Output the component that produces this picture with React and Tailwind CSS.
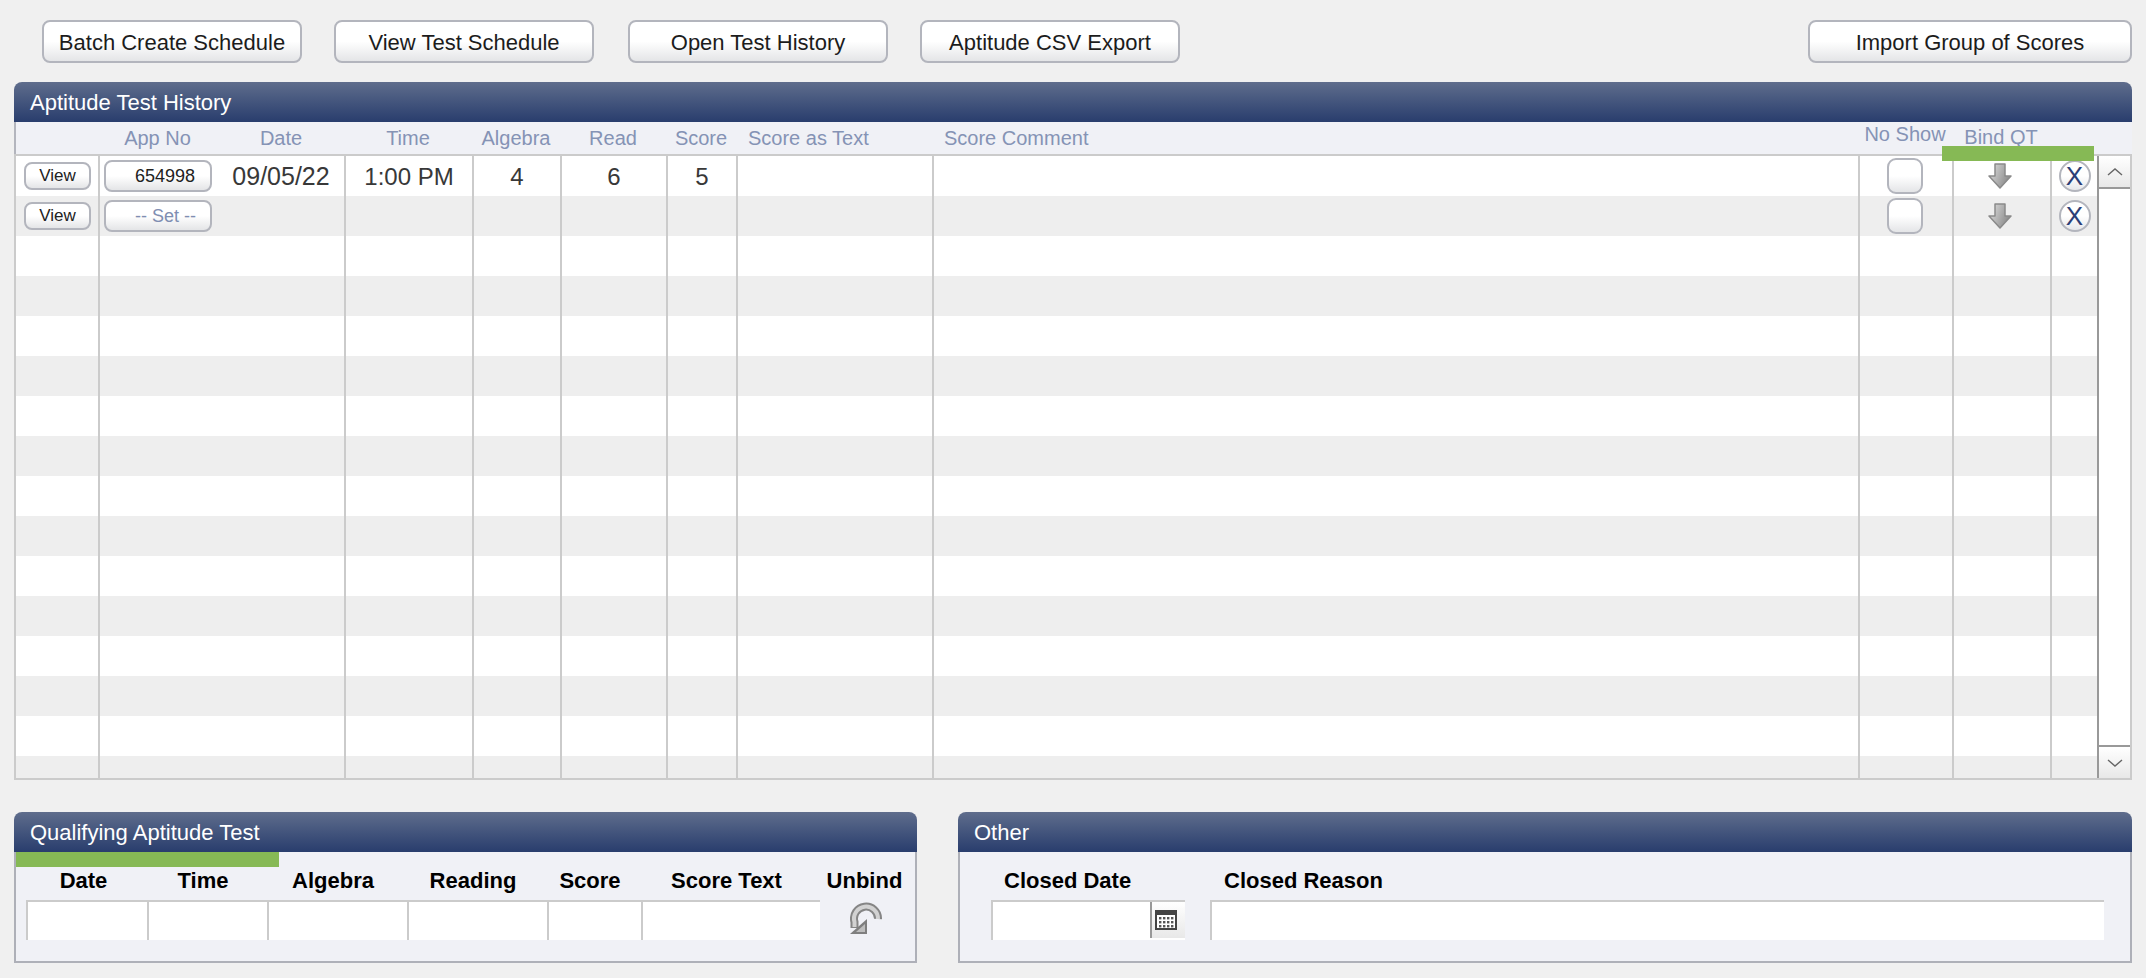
import React from "react";

const rowCols =
  "grid grid-cols-[82px_117px_129px_128px_88px_106px_70px_196px_926px_94px_98px_47px]";

const toolbar = [
  { label: "Batch Create Schedule", cls: "-mr-px" },
  { label: "View Test Schedule", cls: "mr-px" },
  { label: "Open Test History", cls: "-mr-px" },
  { label: "Aptitude CSV Export", cls: "" },
];

const rows = [
  { view: true, app: "654998", date: "09/05/22", time: "1:00 PM", algebra: "4", read: "6", score: "5" },
  { view: true, set: true },
  ...Array.from({ length: 14 }, () => ({})),
];

const btn =
  "rounded-lg border-2 border-[#b3b5bd] bg-gradient-to-b from-white from-50% to-[#e4e5e7] flex items-center";

const PanelHeader = ({ title }) => (
  <div className="h-[40px] rounded-t-lg bg-gradient-to-b from-[#5f6d8c] to-[#293d6d] text-white text-[22px] flex items-center pl-4 pt-px">
    {title}
  </div>
);

const DownArrow = () => (
  <svg width="24" height="26" viewBox="0 0 24 26">
    <defs>
      <linearGradient id="arrowFill" x1="0" y1="0" x2="1" y2="0.4">
        <stop offset="0" stopColor="#e2e2e2" />
        <stop offset="1" stopColor="#8c8c8c" />
      </linearGradient>
    </defs>
    <path d="M7 1H17V13H23L12 25L1 13H7Z" fill="url(#arrowFill)" stroke="#8a8a8a" strokeWidth="1.5" strokeLinejoin="round" />
  </svg>
);

const UnbindIcon = () => (
  <svg width="32" height="32" viewBox="0 0 32 32">
    <path d="M28 17A12 12 0 1 0 4.5 20V26" fill="none" stroke="#858585" strokeWidth="8" />
    <path d="M17 32H0L17 17Z" fill="#7f7f7f" />
    <path d="M28 17A12 12 0 1 0 4.5 20V25" fill="none" stroke="#d2d2d2" strokeWidth="4" />
    <path d="M15 30H6L15 22Z" fill="#bdbdbd" />
  </svg>
);

const CalendarIcon = () => (
  <svg width="22" height="20" viewBox="0 0 22 20">
    <rect x="1" y="1" width="20" height="18" fill="#fff" stroke="#444" strokeWidth="2" />
    <rect x="0" y="0" width="22" height="5" fill="#444" />
    {[7, 11, 15].map((y) =>
      [4, 8, 12, 16].map((x) => <rect key={`${x}-${y}`} x={x} y={y} width="2.4" height="2.4" fill="#555" />)
    )}
  </svg>
);

const Chevron = ({ d }) => (
  <svg width="16" height="10" viewBox="0 0 16 10">
    <path d={d} fill="none" stroke="#666" strokeWidth="1.4" />
  </svg>
);

const Field = ({ className }) => (
  <div className={`h-[40px] bg-white border-t-2 border-l-2 border-[#cbcbcb] ${className || ""}`} />
);

const Row = ({ row, index }) => {
  const line = "border-l-2 border-[#cbcbcb] flex items-center justify-center";
  const data = `${line} pt-[2px]`;
  return (
    <div className={`${rowCols} h-[40px] shrink-0 text-[24px] text-[#383838] ${index % 2 ? "bg-[#eeeeee]" : "bg-white"}`}>
      <div className="flex items-center pl-[8px]">
        {row.view && <div className={`${btn} w-[67px] h-[28px] justify-center text-[17px] text-[#222]`}>View</div>}
      </div>
      <div className={`${line} !justify-start pl-[4px]`}>
        {row.app && <div className={`${btn} w-[108px] h-[32px] justify-end pr-[15px] text-[18px] text-[#222]`}>{row.app}</div>}
        {row.set && <div className={`${btn} w-[108px] h-[32px] justify-end pr-[14px] text-[18px] text-[#7f8eb2]`}>-- Set --</div>}
      </div>
      <div className="flex items-center justify-center pt-[2px] pl-[3px] text-[25px]">{row.date}</div>
      <div className={data}>{row.time}</div>
      <div className={data}>{row.algebra}</div>
      <div className={data}>{row.read}</div>
      <div className={data}>{row.score}</div>
      <div className={line} />
      <div className={line} />
      <div className={`${line} pr-[3px]`}>
        {row.view && <div className={`${btn} w-[36px] h-[36px] !rounded-[9px]`} />}
      </div>
      <div className={`${line} pr-[5px]`}>{row.view && <DownArrow />}</div>
      <div className={line}>
        {row.view && (
          <div className="w-[32px] h-[32px] rounded-full border-2 border-[#b3b5bd] bg-gradient-to-b from-white from-50% to-[#e6e7ea] flex items-center justify-center text-[26px] leading-none text-[#2b3f78]">
            X
          </div>
        )}
      </div>
    </div>
  );
};

const App = () => {
  return (
    <div className="min-h-screen bg-[#f0f0f0] px-[14px] pt-[20px] text-black [font-family:'Liberation_Sans',Arial,sans-serif]">
      <div className="flex gap-[33px] pl-[28px]">
        {toolbar.map(({ label, cls }) => (
          <div key={label} className={`${btn} ${cls} w-[260px] h-[43px] justify-center pt-px text-[22px] text-[#1c1c1c]`}>
            {label}
          </div>
        ))}
        <div className={`${btn} ml-auto w-[324px] h-[43px] justify-center pt-px text-[22px] text-[#1c1c1c]`}>
          Import Group of Scores
        </div>
      </div>

      <div className="relative mt-[19px]">
        <PanelHeader title="Aptitude Test History" />
        <div className="border-l-2 border-[#b3b5bd] bg-[#f0f1f6]">
          <div className={`${rowCols} h-[32px] text-[20px] text-[#8593b5] text-center items-center`}>
            <div />
            <div className="pl-[2px]">App No</div>
            <div className="pl-[3px]">Date</div>
            <div>Time</div>
            <div>Algebra</div>
            <div>Read</div>
            <div>Score</div>
            <div className="text-left pl-[12px]">Score as Text</div>
            <div className="text-left pl-[12px]">Score Comment</div>
            <div className="-mt-[8px]">No Show</div>
            <div className="-mt-[3px]">Bind QT</div>
            <div />
          </div>
        </div>
        <div className="absolute left-[1928px] top-[64px] w-[152px] h-[15px] bg-[#86b955]" />
        <div className="flex border-t-2 border-l-2 border-b-2 border-r-2 border-[#cbcbcb] h-[626px]">
          <div className="bg-[#eeeeee] overflow-hidden flex flex-col h-[622px]">
            {rows.map((row, i) => (
              <Row key={i} row={row} index={i} />
            ))}
          </div>
          <div className="flex-1 flex flex-col bg-white border-l-2 border-[#999999]">
            <div className="h-[33px] border-b-2 border-[#999999] bg-gradient-to-b from-white to-[#e8e8e8] flex items-center justify-center">
              <Chevron d="M1 8L8 2L15 8" />
            </div>
            <div className="flex-1" />
            <div className="h-[33px] border-t-2 border-[#999999] bg-gradient-to-b from-white to-[#e8e8e8] flex items-center justify-center">
              <Chevron d="M1 2L8 8L15 2" />
            </div>
          </div>
        </div>
      </div>

      <div className="grid grid-cols-[903px_1174px] gap-[41px] mt-[32px]">
        <div>
          <PanelHeader title="Qualifying Aptitude Test" />
          <div className="h-[111px] bg-[#f0f1f6] border-x-2 border-b-2 border-[#aeb0b8]">
            <div className="w-[263px] h-[15px] bg-[#86b955]" />
            <div className="grid grid-cols-[121px_120px_140px_140px_94px_179px_90px] pl-[6px] h-[28px] mb-[5px] items-center leading-none text-[22px] font-bold text-center">
              <div className="pl-[2px]">Date</div>
              <div>Time</div>
              <div>Algebra</div>
              <div>Reading</div>
              <div>Score</div>
              <div>Score Text</div>
              <div className="pl-[7px]">Unbind</div>
            </div>
            <div className="grid grid-cols-[121px_120px_140px_140px_94px_179px_90px] pl-[10px]">
              <Field />
              <Field />
              <Field />
              <Field />
              <Field />
              <Field />
              <div className="flex justify-center pt-[2px] pl-[2px]">
                <UnbindIcon />
              </div>
            </div>
          </div>
        </div>
        <div>
          <PanelHeader title="Other" />
          <div className="h-[111px] bg-[#f0f1f6] border-x-2 border-b-2 border-[#aeb0b8] pt-[15px]">
            <div className="flex h-[28px] mb-[5px] items-center leading-none text-[22px] font-bold">
              <div className="w-[264px] pl-[44px]">Closed Date</div>
              <div>Closed Reason</div>
            </div>
            <div className="flex pl-[31px] gap-[25px]">
              <div className="w-[194px] h-[40px] bg-white border-t-2 border-l-2 border-[#cbcbcb] flex justify-end">
                <div className="w-[35px] h-[36px] border-l-2 border-[#999999] bg-gradient-to-b from-white to-[#e8e8e8] flex items-center pl-[3px]">
                  <CalendarIcon />
                </div>
              </div>
              <Field className="w-[894px]" />
            </div>
          </div>
        </div>
      </div>
    </div>
  );
};

export default App;
